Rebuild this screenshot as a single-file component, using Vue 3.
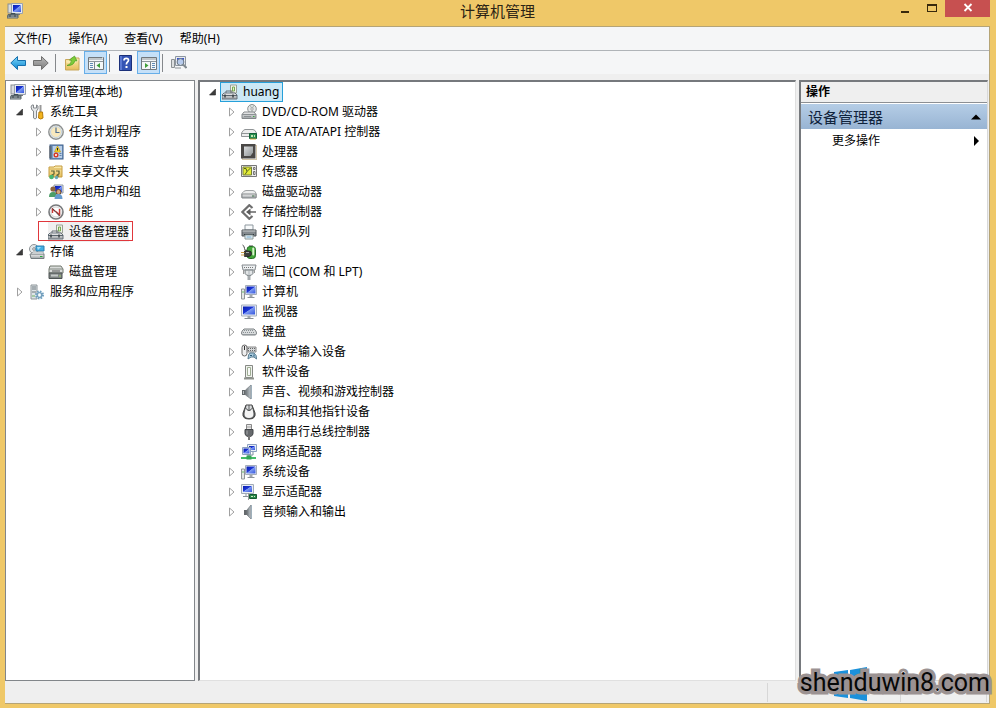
<script setup>
import { ref } from 'vue'

const menus = ['文件(F)', '操作(A)', '查看(V)', '帮助(H)']

const consoleTree = ref([
  { label: '计算机管理(本地)', icon: 'console', level: 0, state: 'root' },
  { label: '系统工具', icon: 'tools', level: 1, state: 'open' },
  { label: '任务计划程序', icon: 'clock', level: 2, state: 'closed' },
  { label: '事件查看器', icon: 'events', level: 2, state: 'closed' },
  { label: '共享文件夹', icon: 'shared', level: 2, state: 'closed' },
  { label: '本地用户和组', icon: 'users', level: 2, state: 'closed' },
  { label: '性能', icon: 'perf', level: 2, state: 'closed' },
  { label: '设备管理器', icon: 'devmgr', level: 2, state: 'leaf', marked: true },
  { label: '存储', icon: 'storage', level: 1, state: 'open' },
  { label: '磁盘管理', icon: 'diskmgr', level: 2, state: 'leaf' },
  { label: '服务和应用程序', icon: 'services', level: 1, state: 'closed' },
])

const devices = ref([
  { label: 'huang', icon: 'devmgr', level: 1, state: 'open', selected: true },
  { label: 'DVD/CD-ROM 驱动器', icon: 'dvd' },
  { label: 'IDE ATA/ATAPI 控制器', icon: 'ide' },
  { label: '处理器', icon: 'cpu' },
  { label: '传感器', icon: 'sensor' },
  { label: '磁盘驱动器', icon: 'disk' },
  { label: '存储控制器', icon: 'storctl' },
  { label: '打印队列', icon: 'printer' },
  { label: '电池', icon: 'battery' },
  { label: '端口 (COM 和 LPT)', icon: 'port' },
  { label: '计算机', icon: 'pc' },
  { label: '监视器', icon: 'monitor' },
  { label: '键盘', icon: 'keyboard' },
  { label: '人体学输入设备', icon: 'hid' },
  { label: '软件设备', icon: 'software' },
  { label: '声音、视频和游戏控制器', icon: 'speaker' },
  { label: '鼠标和其他指针设备', icon: 'mouse' },
  { label: '通用串行总线控制器', icon: 'usb' },
  { label: '网络适配器', icon: 'network' },
  { label: '系统设备', icon: 'pc' },
  { label: '显示适配器', icon: 'display' },
  { label: '音频输入和输出', icon: 'audio' },
].map((d) => ({ level: 2, state: 'closed', ...d })))

const panes = [
  { name: 'console', nodes: consoleTree },
  { name: 'devices', nodes: devices },
]
</script>

<template>
  <div class="window">
    <svg class="defs" aria-hidden="true">
      <defs>
        <linearGradient id="g-screen" x1="0" y1="0" x2="1" y2="1">
          <stop offset="0" stop-color="#0a1fae" /><stop offset=".45" stop-color="#1b35d6" />
          <stop offset=".5" stop-color="#7f9bf2" /><stop offset="1" stop-color="#3355dd" />
        </linearGradient>
        <linearGradient id="g-metal" x1="0" y1="0" x2="0" y2="1">
          <stop offset="0" stop-color="#f4f4f4" /><stop offset="1" stop-color="#9da2a5" />
        </linearGradient>
        <linearGradient id="g-blue" x1="0" y1="0" x2="0" y2="1">
          <stop offset="0" stop-color="#7fd8fb" /><stop offset="1" stop-color="#0c86d0" />
        </linearGradient>
        <linearGradient id="g-gray" x1="0" y1="0" x2="0" y2="1">
          <stop offset="0" stop-color="#bcbcbc" /><stop offset="1" stop-color="#7c7c7c" />
        </linearGradient>
        <linearGradient id="g-cone" x1="0" y1="0" x2="1" y2="0">
          <stop offset="0" stop-color="#6c7276" /><stop offset="1" stop-color="#c3ccd2" />
        </linearGradient>
        <linearGradient id="g-chip" x1="0" y1="0" x2="1" y2="1">
          <stop offset="0" stop-color="#dadcdd" /><stop offset="1" stop-color="#8f9496" />
        </linearGradient>
        <linearGradient id="g-folder" x1="0" y1="0" x2="0" y2="1">
          <stop offset="0" stop-color="#fbeeb4" /><stop offset="1" stop-color="#e5bd59" />
        </linearGradient>
      </defs>
      <symbol id="i-console" viewBox="0 0 16 16">
        <rect x="1" y="1" width="4" height="9" fill="#d9dcdf" stroke="#8a8f94" />
        <path d="M4.500.500h11v10h-11z" fill="#e6e9ee" stroke="#9aa3ad" />
        <path d="M6 2h8v7H6z" fill="url(#g-screen)" />
        <path d="M8 11h5v1H8z" fill="#777" />
        <path d="M1 11.500h10v3.500H0z" fill="#b9bfc2" stroke="#59666b" />
        <path d="M4 11.500v-1h4v1M1 13h10" stroke="#3f5057" fill="none" />
        <path d="M3 12v2M8 12v2" stroke="#3b454a" />
      </symbol>
      <symbol id="i-tools" viewBox="0 0 16 16">
        <path d="M3 1 2 3l1 3 1.500 1V14q1.500 2 3 0V7L9 5V2L7.500 1v3h-3V1z" fill="#e6e8ea" stroke="#85898d" />
        <path d="M11.500 1v7" stroke="#999" stroke-width="2" />
        <path d="M10 8h3.500l.5 6q-2.500 2-4.500 0z" fill="#f3b51f" stroke="#b77b09" />
      </symbol>
      <symbol id="i-clock" viewBox="0 0 16 16">
        <circle cx="8" cy="8" r="7.200" fill="#f7f4e9" stroke="#8b8f90" stroke-width="1.400" />
        <circle cx="8" cy="8" r="5.500" fill="#f9e9bd" stroke="#c3d3e2" />
        <path d="M8 3.500V8.500H11.500" stroke="#4f6f92" fill="none" stroke-width="1.200" />
      </symbol>
      <symbol id="i-events" viewBox="0 0 16 16">
        <rect x="2" y="1" width="13" height="14" fill="#7aa0cb" stroke="#3d5c87" />
        <rect x="5" y="2" width="9" height="12" fill="#b9cfe8" />
        <path d="M1 3h3M1 5h3M1 7h3M1 9h3M1 11h3M1 13h3" stroke="#555" />
        <path d="M9.500 2 12.500 8h-6z" fill="#ffdf28" stroke="#bb8b00" stroke-width=".6" />
        <path d="M9.500 4v2.500" stroke="#222" />
        <circle cx="8" cy="11" r="2.500" fill="#d63824" />
        <path d="m7 10 2 2m0-2-2 2" stroke="#fff" stroke-width=".8" />
        <path d="M11.500 9.500h2M11.500 11.500h2" stroke="#6281aa" />
      </symbol>
      <symbol id="i-shared" viewBox="0 0 16 16">
        <path d="M1 3h5l1-1h7v11H1z" fill="url(#g-folder)" stroke="#c59b3f" />
        <path d="M1 5h13" stroke="#d5ac4f" />
        <path d="M3 7h3v3l-2 1v1h2M8 7h3v3l-2 1v1h2" stroke="#5b6034" fill="none" stroke-width="1.200" />
        <circle cx="3.500" cy="13" r="2.300" fill="#48b672" /><circle cx="8.500" cy="13.500" r="1.700" fill="#68a9b8" />
      </symbol>
      <symbol id="i-users" viewBox="0 0 16 16">
        <path d="M6 1h9v8H6z" fill="#dfe5ee" stroke="#9098a2" /><path d="M7 2h7v6H7z" fill="url(#g-screen)" />
        <circle cx="5" cy="5" r="2.600" fill="#8c633d" /><path d="M1 13q0-5 4-5t4 5z" fill="#4c9e68" />
        <circle cx="10.500" cy="8" r="2.500" fill="#d9a67b" stroke="#674529" /><path d="M6.500 15q0-5 4-5t4 5z" fill="#669bce" />
      </symbol>
      <symbol id="i-perf" viewBox="0 0 16 16">
        <circle cx="8" cy="8" r="7" fill="#f6f6f6" stroke="#77797b" stroke-width="1.600" />
        <circle cx="8" cy="8" r="5" fill="#fff" stroke="#d4d4d4" />
        <path d="M4.500 9V5l3 2.500M11.500 5v6L8 7.500" stroke="#cb3936" fill="none" stroke-width="1.400" />
        <path d="m4.500 4.500 7 7.500" stroke="#4b4b4b" />
      </symbol>
      <symbol id="i-devmgr" viewBox="0 0 16 16">
        <path d="M8.500 1h6v8h-6z" fill="#f0f4ea" stroke="#9aa096" /><path d="M10.500 3h2v4h-2z" fill="#dff0c9" stroke="#79aa52" />
        <path d="M4 9V7h6v2" fill="none" stroke="#666e74" />
        <path d="M2 9h11l2 2v4H0v-4z" fill="url(#g-metal)" stroke="#66717a" />
        <path d="M0 11.500h15" stroke="#59656e" /><path d="M3 10.500v3M11 10.500v3" stroke="#3a4146" stroke-width="1.500" />
      </symbol>
      <symbol id="i-storage" viewBox="0 0 16 16">
        <circle cx="5" cy="5" r="4.500" fill="#e3e7e9" stroke="#8c9295" /><circle cx="5" cy="5" r="1.300" fill="#fff" stroke="#888" />
        <path d="M7 2h8v5H7z" fill="#43aee2" stroke="#2c7fb0" /><path d="M8 3h4l-3 3z" fill="#a6e1fa" />
        <path d="M1 10h14v4.500H2z" fill="url(#g-metal)" stroke="#747c80" /><path d="M11 12.500h2.500" stroke="#25a63e" />
        <path d="M2 10 4 8h10l1 2z" fill="#edf0f1" stroke="#8d9497" stroke-width=".7" />
      </symbol>
      <symbol id="i-diskmgr" viewBox="0 0 16 16">
        <path d="M2 2h11l2 3v4H1V5z" fill="#d9dcda" stroke="#72786f" /><path d="M1 5h14" stroke="#838983" />
        <path d="M1 9h13v5.500H1z" fill="#7f8483" stroke="#4c5352" /><path d="M3 10.500h7v2H3z" fill="#c5c9c7" /><path d="M4 7h8" stroke="#555" /><path d="M11 12h2" stroke="#a7d26d" />
      </symbol>
      <symbol id="i-services" viewBox="0 0 16 16">
        <path d="M2 1h6v14H2z" fill="#dfe4e7" stroke="#8d9599" /><path d="M3 3h4M3 5h4M3 8h4" stroke="#6a767c" /><path d="M3 12h3" stroke="#6ab063" />
        <circle cx="10.500" cy="11" r="3.500" fill="#cde0ee" stroke="#6f9fbf" stroke-width="2" stroke-dasharray="1.500 1.250" />
        <circle cx="10.500" cy="11" r="2.400" fill="#d8e8f3" stroke="#5f8faf" /><circle cx="10.500" cy="11" r="1" fill="#fff" />
      </symbol>
      <symbol id="i-dvd" viewBox="0 0 16 16">
        <circle cx="11" cy="4.800" r="4.300" fill="#e6e8e8" stroke="#8b9090" /><path d="m11 5-2-4M11 5l2-4M11 5v4" stroke="#a9b4ae" /><circle cx="11" cy="5" r="1.200" fill="#fff" stroke="#888" stroke-width=".7" />
        <path d="M1 10.500 3 8h10l2 2.500v4H1z" fill="url(#g-metal)" stroke="#83878a" /><path d="M1 10.500h14M3 12.500h7" stroke="#8c9194" /><path d="M12 12.500h1.500" stroke="#4a4" />
      </symbol>
      <symbol id="i-ide" viewBox="0 0 16 16">
        <path d="M.500 9Q2.500 5.500 4 5.500h8q2 0 3.500 3.500v3.500H.500z" fill="#eceded" stroke="#909496" /><path d="M1 9.500h14" stroke="#8f9496" />
        <path d="M8.500 9.500h7v5h-7z" fill="#2b9052" stroke="#116035" /><path d="M10 11h2v2h-2zM13 11h1v2h-1z" fill="#c3e6b0" /><path d="M9 15h6" stroke="#d8b04a" />
      </symbol>
      <symbol id="i-cpu" viewBox="0 0 16 16">
        <path d="M1.500 1.500h14v14h-14z" fill="none" stroke="#a58a55" stroke-dasharray="1 1" />
        <path d="M0 0h14.500v14.500H0z" fill="#4a4846" />
        <path d="M3 2.500h9v6l-2.500 3.500H3z" fill="url(#g-chip)" />
      </symbol>
      <symbol id="i-sensor" viewBox="0 0 16 16">
        <path d="M.500 1.500h15v11H.500z" fill="#eee" stroke="#777" /><path d="M2 3h8.500v8H2z" fill="#e3ed36" stroke="#777f38" /><path d="M3 4.500h2l1 3 3.500-3.500M6 7.500l-2 3" stroke="#556023" fill="none" /><path d="M12.500 3.500h1.500v2h-1.500zM12.500 7.500h1.500v3h-1.500z" fill="#fff" stroke="#555" stroke-width=".8" />
      </symbol>
      <symbol id="i-disk" viewBox="0 0 16 16">
        <path d="M.800 9.500Q3 6.500 5 6.500h7q2 0 3.200 3v4H.800z" fill="#eceded" stroke="#a1a4a6" /><path d="M1 10h14v4H1z" fill="url(#g-metal)" stroke="#85898b" /><path d="M11 12h2.500" stroke="#3b6b42" />
      </symbol>
      <symbol id="i-storctl" viewBox="0 0 16 16">
        <path d="M11.500 4 8.300 1.200 1.400 8l6.900 6.800 3.200-2.800" fill="none" stroke="#6e6e6e" stroke-width="2.200" /><path d="M7 8h8" stroke="#8b8b8b" stroke-width="2" /><path d="M9.500 4.500v7L5 8z" fill="#5b5b5b" />
      </symbol>
      <symbol id="i-printer" viewBox="0 0 16 16">
        <path d="M4 1h8v5H4z" fill="#f8fafb" stroke="#8d979e" /><path d="M1 6h14v6H1z" fill="#858b8f" stroke="#50565b" /><path d="M1.500 7h13" stroke="#cacecf" /><path d="M3 10h10v1H3z" fill="#343a40" /><path d="M4 11h8v4H4z" fill="#edf5fb" stroke="#899" /><path d="M5.500 13h5" stroke="#6aa3c7" />
      </symbol>
      <symbol id="i-battery" viewBox="0 0 16 16">
        <path d="M8 1.500h4v1H8z" fill="#444" />
        <rect x="6" y="2.500" width="8.500" height="12" rx="3" fill="#41a638" stroke="#276e27" />
        <path d="M12.300 4.500v6" stroke="#d9f5cc" stroke-width="2" stroke-linecap="round" />
        <path d="M1.500 1q2 1 2 3.500T6 6.500" fill="none" stroke="#444" />
        <path d="M3.500 7h4.500q2.500 0 2.500 2.500T8 12.500H3.500z" fill="#3d3f3d" stroke="#1f201f" stroke-width=".8" />
        <path d="M0 8.500h3.500M0 11h3.500" stroke="#c79b45" stroke-width="1.200" /><path d="M5 8.500h3" stroke="#a5a8a5" />
      </symbol>
      <symbol id="i-port" viewBox="0 0 16 16">
        <path d="M1 1h14l-1 5H2z" fill="#eceff1" stroke="#84898d" /><path d="M3 3.500h10" stroke="#777" stroke-dasharray="1 1" /><path d="M4 6h8v3.500l-2 2H6l-2-2z" fill="#c7cccf" stroke="#7e8588" /><path d="M6.500 11.500h3V16h-3z" fill="#a5aaad" /><path d="M6 7v3M10 7v3" stroke="#fff" /><path d="M2.500 6v4M13.500 6v3" stroke="#999" />
      </symbol>
      <symbol id="i-pc" viewBox="0 0 16 16">
        <path d="M.500 5h3v10h-3z" fill="#e5e7e8" stroke="#919698" /><path d="M2 7v2" stroke="#6b6" /><path d="M4.500 1.500h11v9h-11z" fill="#eceff4" stroke="#a4adb9" /><path d="M5.500 2.500h9v7h-9z" fill="url(#g-screen)" /><path d="M8.500 11h3v2h-3z" fill="#a2a7ac" /><path d="M6.500 13.500h7" stroke="#8c9398" />
      </symbol>
      <symbol id="i-monitor" viewBox="0 0 16 16">
        <path d="M.500 1h15v11H.500z" fill="#e9edf4" stroke="#a6b0bd" /><path d="M2 2.500h12v8H2z" fill="url(#g-screen)" /><path d="M6.500 12h3v2h-3z" fill="#9fa7ad" /><path d="M3.500 14.500h9" stroke="#858d94" />
      </symbol>
      <symbol id="i-keyboard" viewBox="0 0 16 16">
        <path d="M3 5h10q2.500 2 2.500 4t-1.500 2H2Q.500 11 .500 9T3 5z" fill="#d9dcdd" stroke="#7d8184" stroke-linejoin="round" /><path d="M3 6.500h10M2 8.500h12" stroke="#8a9094" stroke-dasharray="1 1" /><path d="M1.500 10.500h13" stroke="#92979b" />
      </symbol>
      <symbol id="i-hid" viewBox="0 0 16 16">
        <rect x="1" y="1" width="5" height="11" rx="2.500" fill="#eee" stroke="#666" /><path d="M3.500 2v4" stroke="#333" /><path d="M6 3h9v5H7z" fill="#d6d9db" stroke="#888" /><path d="M7 4.500h7M7 6.500h7" stroke="#666" stroke-dasharray="1 1" /><path d="M7 15q0-5 2-6h4q3 2 2.500 6l-2.500-2h-3z" fill="#a9cadd" stroke="#587d91" /><path d="M9 11.500h2M13 10.500v2" stroke="#285976" />
      </symbol>
      <symbol id="i-software" viewBox="0 0 16 16">
        <path d="M4.500 1.500h7v12h-7z" fill="#f0f2ee" stroke="#868984" /><path d="M6.500 3.500h3v8h-3z" fill="#f8faf7" stroke="#9fae94" /><path d="M3 13.500h10v2H3z" fill="#8f938d" />
      </symbol>
      <symbol id="i-speaker" viewBox="0 0 16 16">
        <path d="M1 6h4v5H1z" fill="#64696c" /><path d="M4.500 6 10 1v14l-5.500-4z" fill="url(#g-cone)" stroke="#787f84" stroke-width=".7" /><path d="M10.500 1v14" stroke="#9fb0bb" /><path d="M2.500 7v3" stroke="#b9bec1" />
      </symbol>
      <symbol id="i-audio" viewBox="0 0 16 16">
        <path d="M3 6h3v5H3z" fill="#64696c" /><path d="m6 6 4-5v14l-4-4z" fill="url(#g-cone)" stroke="#787f84" stroke-width=".7" /><path d="M10.500 1v14" stroke="#9fb0bb" />
      </symbol>
      <symbol id="i-mouse" viewBox="0 0 16 16">
        <path d="M5 1h6l3 8q1 6-6 6T2 9z" fill="#5b5e60" stroke="#444" /><path d="M4.500 4.500 7 7h2l2.500-2.500 1 5.500q0 4-4.500 4t-4.500-4z" fill="#f4f4f4" /><path d="M5.500 1.500h2V6L5 4zM8.500 1.500h2L11 4 8.500 6z" fill="#dadcdd" />
      </symbol>
      <symbol id="i-usb" viewBox="0 0 16 16">
        <path d="M5.500.500h5v5h-5z" fill="#e8e8e8" stroke="#888" /><path d="M6.500 2.500h1v1h-1zM8.500 2.500h1v1h-1z" fill="#555" /><path d="M4 5.500h8v4q0 2-2.500 3h-3Q4 11.500 4 9.500z" fill="#66696c" stroke="#434649" /><path d="M6 6.500v4" stroke="#a5a8aa" /><path d="M8 12v4" stroke="#777" stroke-width="2" />
      </symbol>
      <symbol id="i-network" viewBox="0 0 16 16">
        <path d="M6.500.500h9v7h-9z" fill="#e8edf5" stroke="#8ca1bf" /><path d="M8 2h6v4H8z" fill="url(#g-screen)" /><path d="M1.500 3.500h8v7h-8z" fill="#e8edf5" stroke="#8ca1bf" /><path d="M2.500 4.500h6v5h-6z" fill="url(#g-screen)" /><path d="M12 8v3H6M8 11v3" stroke="#7e8fa1" fill="none" /><path d="M0 13h15v2H0z" fill="#44bd68" /><path d="M5.500 11.500h5v4h-5z" fill="#35a557" />
      </symbol>
      <symbol id="i-display" viewBox="0 0 16 16">
        <path d="M.500.500h12v9H.500z" fill="#e9edf4" stroke="#a1abb7" /><path d="M2 2h9v6H2z" fill="url(#g-screen)" /><path d="M2 12.500h6M5 10v2" stroke="#8b949b" /><path d="M8.500 10.500h7v4h-7z" fill="#28874a" stroke="#155c30" /><path d="M10 12h2v1h-2zM13 12h1v1h-1z" fill="#d3edc3" /><path d="M7.500 9v7" stroke="#999" />
      </symbol>
      <symbol id="i-back" viewBox="0 0 16 16">
        <path d="M.800 8 7.500 1.500v4h8v5h-8v4z" fill="url(#g-blue)" stroke="#1670ae" stroke-linejoin="round" />
      </symbol>
      <symbol id="i-forward" viewBox="0 0 16 16">
        <path d="M15.200 8 8.500 1.500v4h-8v5h8v4z" fill="url(#g-gray)" stroke="#707070" stroke-linejoin="round" />
      </symbol>
      <symbol id="i-up" viewBox="0 0 16 16">
        <path d="M.500 4.500h5l1-1.500h7.500v12H.500z" fill="url(#g-folder)" stroke="#c9a75c" /><path d="M1.500 7h9l3-2" stroke="#fff4c7" fill="none" />
        <path d="M2 10.500q4-.5 4.500-5L4.500 5 9.500 1l2.500 5-2-.3Q8.500 11 2 10.500z" fill="#7ccb3a" stroke="#4b9e22" stroke-width=".7" />
      </symbol>
      <symbol id="i-tree" viewBox="0 0 16 16">
        <path d="M.500 2.500h15v12H.500z" fill="#f5f7f8" stroke="#71777c" /><path d="M1 4h14M1 6.500h14" stroke="#8d969d" /><path d="M6.500 7v7" stroke="#7d858b" /><path d="M2 8.500h3M2 10.500h3M2 12.500h3" stroke="#618bb5" /><path d="M12 8v5L8.500 10.500z" fill="#3e9e38" /><path d="M14 3h1" stroke="#fff" />
      </symbol>
      <symbol id="i-actions" viewBox="0 0 16 16">
        <path d="M.500 2.500h15v12H.500z" fill="#f5f7f8" stroke="#71777c" /><path d="M1 4h14M1 6.500h14" stroke="#8d969d" /><path d="M9.500 7v7" stroke="#7d858b" /><path d="M11 8.500h3M11 10.500h3M11 12.500h3" stroke="#618bb5" /><path d="M4 8v5l3.500-2.500z" fill="#3e9e38" />
      </symbol>
      <symbol id="i-help" viewBox="0 0 16 16">
        <path d="M1.500.500h12v15h-12z" fill="#3454b4" stroke="#1b3079" /><path d="M2 1h2v14H2z" fill="#5a78d2" /><path d="M6 5.500q0-2.200 2.300-2.200t2.200 2q0 1-1.200 1.900-.9.700-.9 2.300" fill="none" stroke="#fff" stroke-width="1.700" /><path d="M7.500 11h2v2h-2z" fill="#fff" />
      </symbol>
      <symbol id="i-scan" viewBox="0 0 16 16">
        <path d="M.500 4.500h3v8h-3z" fill="#dcdfe0" stroke="#8b9093" /><path d="M4.500 1.500h10v9h-10z" fill="#e8ebf0" stroke="#8d96a0" /><path d="M6 3h7v6H6z" fill="#3450cf" /><circle cx="9.500" cy="7" r="3.400" fill="#cfe0f2" fill-opacity=".85" stroke="#6b7883" /><path d="m12 9.500 3.500 3.500" stroke="#80898f" stroke-width="2" /><path d="M4 13h6" stroke="#8b9296" />
      </symbol>
      <symbol id="i-closed" viewBox="0 0 16 16">
        <path d="M5.500 4v8l4.500-4z" fill="#fff" stroke="#a0a0a0" />
      </symbol>
      <symbol id="i-open" viewBox="0 0 16 16">
        <path d="M10.500 5v6h-6z" fill="#3c3c3c" stroke="#262626" stroke-width=".6" />
      </symbol>
    </svg>

    <header class="titlebar">
      <svg class="icon"><use href="#i-console" /></svg>
      <h1>计算机管理</h1>
      <div class="caption">
        <button class="cap-btn" aria-label="最小化"><svg viewBox="0 0 12 12"><path d="M2 8h8v2H2z" fill="#38290c" /></svg></button>
        <button class="cap-btn" aria-label="最大化"><svg viewBox="0 0 12 12"><path d="M1 1h10v8H1zM2 3v5h8V3z" fill="#38290c" fill-rule="evenodd" /></svg></button>
        <button class="cap-btn close" aria-label="关闭"><svg viewBox="0 0 12 12"><path d="m2.500 1 7 7m0-7-7 7" stroke="#fff" stroke-width="1.800" /></svg></button>
      </div>
    </header>

    <div class="client">
      <nav class="menubar">
        <button v-for="m in menus" :key="m">{{ m }}</button>
      </nav>

      <div class="toolbar">
        <button aria-label="后退"><svg class="icon"><use href="#i-back" /></svg></button>
        <button aria-label="前进"><svg class="icon"><use href="#i-forward" /></svg></button>
        <span class="sep first"></span>
        <button aria-label="上移"><svg class="icon"><use href="#i-up" /></svg></button>
        <button class="on" aria-label="控制台树"><svg class="icon"><use href="#i-tree" /></svg></button>
        <span class="sep"></span>
        <button aria-label="帮助"><svg class="icon"><use href="#i-help" /></svg></button>
        <button class="on" aria-label="操作窗格"><svg class="icon"><use href="#i-actions" /></svg></button>
        <span class="sep"></span>
        <button aria-label="扫描硬件"><svg class="icon"><use href="#i-scan" /></svg></button>
      </div>

      <main class="panes">
        <section v-for="pane in panes" :key="pane.name" class="pane" :class="pane.name">
          <ul class="tree">
            <li v-for="node in pane.nodes.value" :key="node.label" :class="['row', 'level' + node.level]">
              <button v-if="node.state === 'open' || node.state === 'closed'" class="twisty" :aria-label="node.label">
                <svg class="icon"><use :href="'#i-' + node.state" /></svg>
              </button>
              <span v-else-if="node.state === 'leaf'" class="twisty"></span>
              <button class="node" :class="{ selected: node.selected, marked: node.marked }">
                <svg class="icon"><use :href="'#i-' + node.icon" /></svg>
                <span>{{ node.label }}</span>
              </button>
            </li>
          </ul>
        </section>

        <aside class="pane actions">
          <h2>操作</h2>
          <button class="group">
            <span>设备管理器</span>
            <svg viewBox="0 0 10 10"><path d="M5 2.500 10 7.500H0z" /></svg>
          </button>
          <button class="more">
            <span>更多操作</span>
            <svg viewBox="0 0 10 10"><path d="M3 0v10l5-5z" /></svg>
          </button>
        </aside>
      </main>

      <footer class="status"><span></span><span></span><span></span></footer>
    </div>

    <div class="watermark">
      <svg viewBox="0 0 34 34"><path d="M0 5 14 3v13H0zM16 3 33 0v16H16zM0 18h14v13L0 29zM16 18h17v16l-17-3z" fill="#1b91dc" /></svg>
      <span>shenduwin8.com</span>
    </div>
  </div>
</template>

<style>
body {
  background: #efc868;
}
</style>

<style scoped>
* {
  box-sizing: border-box;
}
.window {
  position: relative;
  display: flex;
  flex-direction: column;
  min-height: 100vh;
  padding: 0 6px 4px 5px;
  background: #efc868;
  color: #000;
  font: 12px/20px "Noto Sans", "Noto Sans CJK SC", sans-serif;
}
.defs {
  position: absolute;
  width: 0;
  height: 0;
}
button {
  display: flex;
  align-items: center;
  margin: 0;
  padding: 0;
  border: 0;
  background: none;
  color: inherit;
  font: inherit;
  white-space: nowrap;
}
.icon {
  display: block;
  flex: none;
  width: 16px;
  height: 16px;
}
.titlebar {
  display: grid;
  grid-template-columns: 1fr auto 1fr;
  align-items: start;
  height: 26px;
}
.titlebar > .icon {
  margin: 3px 0 0 2px;
}
h1 {
  margin: 0;
  color: #2b2314;
  font-size: 15px;
  font-weight: 400;
  line-height: 23px;
}
.caption {
  display: flex;
  justify-content: flex-end;
}
.cap-btn {
  justify-content: center;
  width: 27px;
  height: 17px;
}
.cap-btn svg {
  width: 12px;
  height: 12px;
}
.cap-btn.close {
  width: 45px;
  background: #c75050;
}
.client {
  flex: 1;
  display: flex;
  flex-direction: column;
  border: 1px solid #b5a476;
  border-left: 0;
  background: #efefef;
}
.menubar {
  display: flex;
  gap: 17px;
  height: 24px;
  padding-left: 9px;
  border-bottom: 1px solid #b0b4b8;
  background: #f5f6f7;
}
.toolbar {
  display: flex;
  align-items: center;
  height: 23px;
  padding-left: 1px;
  background: #f5f6f7;
}
.toolbar button {
  justify-content: center;
  width: 23px;
  height: 23px;
}
.toolbar .on {
  border: 1px solid #67aee8;
  background: #c5e0f8;
}
.sep {
  width: 1px;
  height: 18px;
  margin: 0 4px 0 2px;
  background: #85888c;
}
.sep.first {
  margin: 0 5px 0 3px;
}
.panes {
  flex: 1;
  display: grid;
  grid-template-columns: 190px 1fr 189px;
  gap: 3px;
  padding: 6px 1px 0 0;
}
.pane {
  border: 1px solid #82868a;
  background: #fff;
}
.devices {
  border-width: 2px 1px 1px 2px;
  border-color: #76797d #e0e0e0 #e0e0e0 #76797d;
}
.tree {
  margin: 0;
  padding: 0;
  list-style: none;
}
.devices .tree {
  padding-left: 3px;
}
.console .tree {
  padding: 1px 0 0 4px;
}
.row {
  display: flex;
  height: 20px;
}
.level2 {
  padding-left: 19px;
}
.twisty {
  justify-content: center;
  width: 19px;
  height: 20px;
}
.node {
  position: relative;
  gap: 5px;
  height: 20px;
}
.selected::before {
  content: "";
  position: absolute;
  inset: 0 -4px 0 -2px;
  border: 1px solid #26a0da;
  background: #cbe8f6;
}
.selected > * {
  position: relative;
}
.marked {
  background: #f0f0f0;
}
.marked::after {
  content: "";
  position: absolute;
  inset: -1px -4px 1px -10px;
  border: 1px solid #e0373c;
}
.actions {
  border-width: 2px 1px 1px 2px;
  border-color: #76797d #d8d8d8 #d8d8d8 #76797d;
}
.actions h2 {
  height: 21px;
  margin: 0 0 1px;
  padding-left: 5px;
  border-bottom: 1px solid #8c8f93;
  background: #efefef;
  font-size: 12px;
  font-weight: 700;
  line-height: 20px;
}
.actions button {
  justify-content: space-between;
  width: 100%;
}
.actions svg {
  width: 10px;
  height: 10px;
}
.actions .group {
  height: 25px;
  padding: 0 6px 0 7px;
  background: linear-gradient(#b5cde6, #98b4d3);
  color: #10233c;
  font-size: 15px;
}
.actions .group svg {
  fill: #000;
}
.actions .more {
  height: 24px;
  padding: 0 6px 0 31px;
}
.status {
  display: flex;
  justify-content: flex-end;
  height: 22px;
  padding: 2px 2px 1px 0;
}
.status span {
  width: 133px;
  border-left: 1px solid #d7d7d7;
}
.status span:nth-child(2) {
  width: 86px;
}
.status span:last-child {
  width: 1px;
}
.watermark {
  position: absolute;
  right: 6px;
  bottom: 5px;
  color: #080808;
  font: 25px/40px Roboto, "Open Sans", sans-serif;
}
.watermark span {
  position: relative;
  paint-order: stroke fill;
  -webkit-text-stroke: 7px #9b9292;
}
.watermark svg {
  position: absolute;
  left: 34px;
  top: 4px;
  width: 34px;
  height: 34px;
}
</style>
